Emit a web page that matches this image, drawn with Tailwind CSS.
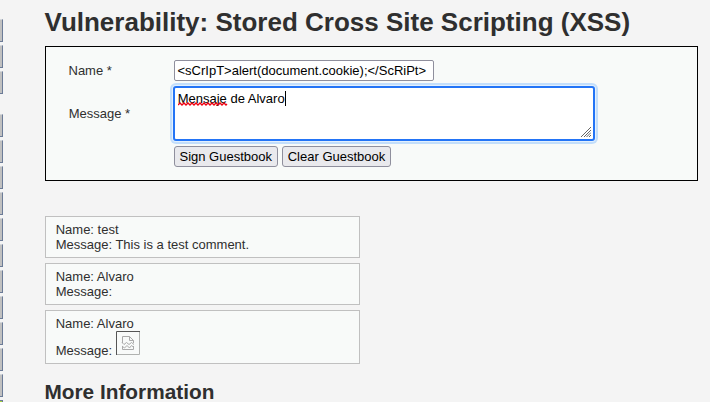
<!DOCTYPE html>
<html lang="en">
<head>
<meta charset="utf-8">
<title>Vulnerability: Stored Cross Site Scripting (XSS)</title>
<script src="https://cdn.jsdelivr.net/npm/@tailwindcss/browser@4"></script>
</head>
<body class="flex h-[402px] w-[710px] overflow-hidden bg-[#f4f4f4] font-['Liberation_Sans',Arial,sans-serif] text-[13px] leading-[15px] text-[#2f2f2f]">
<nav class="flex h-[402px] w-[3px] shrink-0 flex-col gap-[3px] pt-[19px]">
<i class="h-[23px] shrink-0 border-t border-r border-b border-t-[#d5d8dc] border-r-[#6b7b97] border-b-[#6b7b97] bg-[#c0c0c0]"></i>
<i class="h-[23px] shrink-0 border-t border-r border-b border-t-[#d5d8dc] border-r-[#6b7b97] border-b-[#6b7b97] bg-[#c0c0c0]"></i>
<i class="mb-[17px] h-[23px] shrink-0 border-t border-r border-b border-t-[#d5d8dc] border-r-[#6b7b97] border-b-[#6b7b97] bg-[#c0c0c0]"></i>
<i class="h-[23px] shrink-0 border-t border-r border-b border-t-[#d5d8dc] border-r-[#6b7b97] border-b-[#6b7b97] bg-[#c0c0c0]"></i>
<i class="h-[23px] shrink-0 border-t border-r border-b border-t-[#d5d8dc] border-r-[#6b7b97] border-b-[#6b7b97] bg-[#c0c0c0]"></i>
<i class="h-[23px] shrink-0 border-t border-r border-b border-t-[#d5d8dc] border-r-[#6b7b97] border-b-[#6b7b97] bg-[#c0c0c0]"></i>
<i class="h-[23px] shrink-0 border-t border-r border-b border-t-[#d5d8dc] border-r-[#6b7b97] border-b-[#6b7b97] bg-[#c0c0c0]"></i>
<i class="h-[23px] shrink-0 border-t border-r border-b border-t-[#d5d8dc] border-r-[#6b7b97] border-b-[#6b7b97] bg-[#c0c0c0]"></i>
<i class="h-[23px] shrink-0 border-t border-r border-b border-t-[#d5d8dc] border-r-[#6b7b97] border-b-[#6b7b97] bg-[#c0c0c0]"></i>
<i class="h-[23px] shrink-0 border-t border-r border-b border-t-[#d5d8dc] border-r-[#6b7b97] border-b-[#6b7b97] bg-[#c0c0c0]"></i>
<i class="h-[23px] shrink-0 border-t border-r border-b border-t-[#d5d8dc] border-r-[#6b7b97] border-b-[#6b7b97] bg-[#c0c0c0]"></i>
<i class="h-[23px] shrink-0 border-t border-r border-b border-t-[#d5d8dc] border-r-[#6b7b97] border-b-[#6b7b97] bg-[#c0c0c0]"></i>
<i class="h-[23px] shrink-0 border-t border-r border-b border-t-[#d5d8dc] border-r-[#6b7b97] border-b-[#6b7b97] bg-[#c0c0c0]"></i>
<i class="h-[23px] shrink-0 border-t border-r border-b border-t-[#d5d8dc] border-r-[#6b7b97] border-b-[#6b7b97] bg-[#c0c0c0]"></i>
<i class="h-[2px] shrink-0 border-t border-r border-t-[#6b7b97] border-r-[#6b7b97] bg-[#a6d635]"></i>
</nav>
<main class="ml-[42px] h-[402px] w-[653px] shrink-0">
<h1 class="-ml-[0.5px] h-[46px] pt-[7px] text-[26px] leading-[30px] font-bold whitespace-nowrap">Vulnerability: Stored Cross Site Scripting (XSS)</h1>
<form class="h-[135px] border border-black bg-[#f8faf9] pt-[13px] pl-[23px]">
<div class="flex h-[21px] items-center">
<label class="-ml-[0.5px] w-[105.5px] shrink-0">Name *</label>
<div class="flex h-[21px] w-[260px] items-center rounded-[2px] border border-[#8f8f9d] bg-white pl-[2.5px] whitespace-nowrap text-black">&lt;sCrIpT&gt;alert(document.cookie);&lt;/ScRiPt&gt;</div>
</div>
<div class="mt-[5px] flex h-[55px] items-center">
<label class="-ml-[0.3px] w-[104.3px] shrink-0">Message *</label>
<div class="relative h-[55px] w-[422px] rounded-[3px] border-2 border-[#2374f6] bg-white pt-[3px] pl-[2.7px] text-black shadow-[0_0_0_1px_#e3f0fd,0_0_0_3px_#c3defb]">
<div class="flex"><span>Mensaje</span><span>&nbsp;de Alvaro</span><span class="ml-[0.3px] h-[15px] w-px bg-black"></span></div>
<svg class="absolute top-[14px] left-[3px]" width="50" height="4" viewBox="0 0 50 4" fill="none" stroke="#f00010" stroke-width="1.4"><path d="M0 3 2 1 4 3 6 1 8 3 10 1 12 3 14 1 16 3 18 1 20 3 22 1 24 3 26 1 28 3 30 1 32 3 34 1 36 3 38 1 40 3 42 1 44 3 46 1 48 3 49 2"/></svg>
<svg class="absolute right-[2px] bottom-[2px]" width="10" height="10" viewBox="0 0 10 10" fill="none" stroke="#666" stroke-width="1"><path d="M0 10 10 0M3 10 10 3M5.500 10 10 5.500M8 10 10 8"/></svg>
</div>
</div>
<div class="mt-[5px] ml-[105px] flex gap-1 text-black">
<button type="button" class="h-[21px] w-[104px] rounded-[3px] border border-[#8f8f9d] bg-[#e9e9ed] pr-[0.5px] whitespace-nowrap">Sign Guestbook</button>
<button type="button" class="h-[21px] w-[109px] rounded-[3px] border border-[#8f8f9d] bg-[#e9e9ed] whitespace-nowrap">Clear Guestbook</button>
</div>
</form>
<section class="mt-[35px] flex w-[315px] flex-col gap-[5px]">
<div class="h-[42px] border border-[#c0c0c0] bg-[#f8faf9] pt-[5px] pl-[9.7px]">Name: test<br>Message: This is a test comment.</div>
<div class="h-[42px] border border-[#c0c0c0] bg-[#f8faf9] pt-[5px] pl-[9.7px]">Name: Alvaro<br>Message:</div>
<div class="h-[54px] border border-[#c0c0c0] bg-[#f8faf9] pt-[5px] pl-[9.7px]">
<div>Name: Alvaro</div>
<div class="flex items-end"><span class="-mb-[3px] w-[60.3px]">Message:</span>
<svg width="24" height="24" viewBox="0 0 24 24" fill="none"><path d="M23.5 0V23.5H0" stroke="#b0b2b0"/><path d="M.5 24V.5H24" stroke="#555"/><g stroke="#aaa"><path d="M6.500 12V5.500H13.500L17.500 9.500V12M13.500 5.500V9.500H17.500"/><path d="M6 11.500 8 13.500 10.500 11.500 13 13.500 15.500 11.500 18 13.500M6.500 15V18.500H17.500V15M6 15 8.500 17 11 14.500 13.500 17 15.500 14.500 18 16.500"/></g></svg></div>
</div>
</section>
<h2 class="-ml-[0.5px] h-[38px] overflow-hidden pt-[16px] text-[20.8px] leading-[24px] font-bold whitespace-nowrap">More Information</h2>
</main>
</body>
</html>
